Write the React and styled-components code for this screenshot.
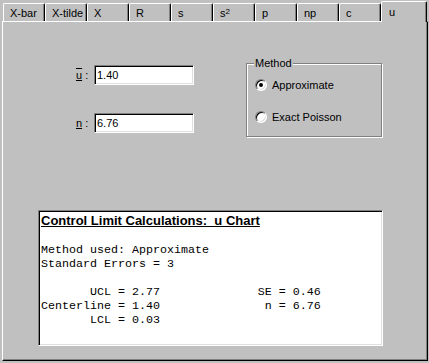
import React, { useState } from 'react';
import styled, { createGlobalStyle, css } from 'styled-components';

// Tab captions of the control chart dialog. 's2' is drawn as s with a superscript 2.
const TABS = ['X-bar', 'X-tilde', 'X', 'R', 's', 's2', 'p', 'np', 'c', 'u'];

const REPORT = [
    'Method used: Approximate',
    'Standard Errors = 3',
    '',
    '       UCL = 2.77              SE = 0.46',
    'Centerline = 1.40               n = 6.76',
    '       LCL = 0.03',
].join('\n');

function App() {
    const [activeTab, setActiveTab] = useState('u');
    const [method, setMethod] = useState('approx');

    const renderCaption = (t) => {
        if (t === 's2') return <>s<Sup>2</Sup></>;
        return t;
    };

    return (
        <Window>
            <GlobalStyle />
            <TabStrip>
                {TABS.map((t) => (
                    <Tab key={t} $active={activeTab === t} onClick={() => setActiveTab(t)}>
                        {renderCaption(t)}
                    </Tab>
                ))}
            </TabStrip>
            <Panel>
                <TopRow>
                    <Fields>
                        <FieldRow>
                            <FieldLabel><Accel $bar>u</Accel><Colon>:</Colon></FieldLabel>
                            <TextBox readOnly value="1.40" />
                        </FieldRow>
                        <FieldRow>
                            <FieldLabel><Accel>n</Accel><Colon>:</Colon></FieldLabel>
                            <TextBox readOnly value="6.76" />
                        </FieldRow>
                    </Fields>
                    <GroupBox>
                        <Legend>Method</Legend>
                        <RadioRow onClick={() => setMethod('approx')}>
                            <RadioMark $checked={method === 'approx'} />
                            Approximate
                        </RadioRow>
                        <RadioRow onClick={() => setMethod('exact')}>
                            <RadioMark $checked={method === 'exact'} />
                            Exact Poisson
                        </RadioRow>
                    </GroupBox>
                </TopRow>
                <Output>
                    <OutputTitle>Control Limit Calculations:  u Chart</OutputTitle>
                    <OutputText>{REPORT}</OutputText>
                </Output>
            </Panel>
        </Window>
    );
}

// --- Styled Components ---

const GlobalStyle = createGlobalStyle`
    html, body {
        margin: 0;
        padding: 0;
        background: #c0c0c0;
    }
    body {
        font-family: "Liberation Sans", Arial, sans-serif;
        font-size: 11px;
        color: #000;
    }
`;

const Window = styled.div`
    width: 429px;
    height: 363px;
    box-sizing: border-box;
    padding: 1px 1px 2px 2px;
    background: #c0c0c0;
    overflow: hidden;
`;

const TabStrip = styled.div`
    display: flex;
    align-items: flex-end;
    height: 20px;
    padding-left: 1px;
    position: relative;
    z-index: 1;
`;

const Tab = styled.div`
    box-sizing: border-box;
    width: 42px;
    height: 18px;
    padding: 3px 0 0 6px;
    line-height: 13px;
    background: #c0c0c0;
    border-top: 1px solid #fff;
    border-left: 1px solid #fff;
    border-right: 1px solid #000;
    border-radius: 2px 2px 0 0;
    box-shadow: inset -1px 0 0 #808080;
    white-space: nowrap;
    cursor: default;

    ${({ $active }) => $active && css`
        width: 46px;
        height: 21px;
        margin-bottom: -1px;
        padding: 4px 0 0 7px;
    `}
`;

const Sup = styled.span`
    font-size: 8px;
    vertical-align: top;
    position: relative;
    top: -2px;
`;

const Panel = styled.div`
    box-sizing: border-box;
    width: 426px;
    height: 340px;
    padding: 41px 0 0 35px;
    border-top: 1px solid #fff;
    border-left: 1px solid #fff;
    border-right: 1px solid #000;
    border-bottom: 1px solid #000;
    box-shadow: inset -1px -1px 0 #808080;
`;

const TopRow = styled.div`
    display: flex;
    align-items: flex-start;
    padding-left: 38px;
`;

const Fields = styled.div`
    display: flex;
    flex-direction: column;
    gap: 28px;
    margin-top: 2px;
`;

const FieldRow = styled.div`
    display: flex;
    align-items: center;
`;

const FieldLabel = styled.label`
    width: 18px;
    line-height: 13px;
    white-space: nowrap;
`;

const Accel = styled.span`
    text-decoration: underline;
    ${({ $bar }) => $bar && css`
        text-decoration-line: underline overline;
    `}
`;

const Colon = styled.span`
    margin-left: 3px;
`;

const TextBox = styled.input`
    box-sizing: border-box;
    width: 100px;
    height: 20px;
    margin: 0;
    padding: 0 2px;
    font: 11px "Liberation Sans", Arial, sans-serif;
    color: #000;
    background: #fff;
    border: 1px solid;
    border-color: #808080 #fff #fff #808080;
    box-shadow: inset 1px 1px 0 #000, inset -1px -1px 0 #dfdfdf;
    outline: none;
`;

const GroupBox = styled.div`
    position: relative;
    box-sizing: border-box;
    width: 136px;
    height: 74px;
    margin-left: 52px;
    padding: 15px 0 0 8px;
    display: flex;
    flex-direction: column;
    gap: 20px;
    border: 1px solid #808080;
    box-shadow: 1px 1px 0 #fff, inset 1px 1px 0 #fff;
`;

const Legend = styled.span`
    position: absolute;
    top: -7px;
    left: 7px;
    padding: 0 1px;
    line-height: 13px;
    background: #c0c0c0;
`;

const RadioRow = styled.div`
    display: flex;
    align-items: center;
    gap: 5px;
    height: 12px;
    line-height: 13px;
    cursor: default;
`;

const RadioMark = styled.span`
    position: relative;
    box-sizing: border-box;
    width: 12px;
    height: 12px;
    border-radius: 50%;
    background: #fff;
    border: 1px solid;
    border-color: #808080 #fff #fff #808080;
    box-shadow: inset 1px 1px 0 #000, inset -1px -1px 0 #dfdfdf;

    ${({ $checked }) => $checked && css`
        &::after {
            content: '';
            position: absolute;
            left: 3px;
            top: 3px;
            width: 4px;
            height: 4px;
            border-radius: 50%;
            background: #000;
        }
    `}
`;

const Output = styled.div`
    box-sizing: border-box;
    width: 345px;
    height: 136px;
    margin-top: 73px;
    padding: 2px 0 0 2px;
    background: #fff;
    border: 1px solid;
    border-color: #808080 #fff #fff #808080;
    box-shadow: inset 1px 1px 0 #000, inset -1px -1px 0 #dfdfdf;
    overflow: hidden;
`;

const OutputTitle = styled.div`
    font: bold 13px/15px "Liberation Sans", Arial, sans-serif;
    text-decoration: underline;
    white-space: pre;
`;

const OutputText = styled.pre`
    margin: 15px 0 0;
    font-family: "Liberation Mono", "Courier New", monospace;
    font-size: 11.67px;
    line-height: 14px;
`;

export default App;
